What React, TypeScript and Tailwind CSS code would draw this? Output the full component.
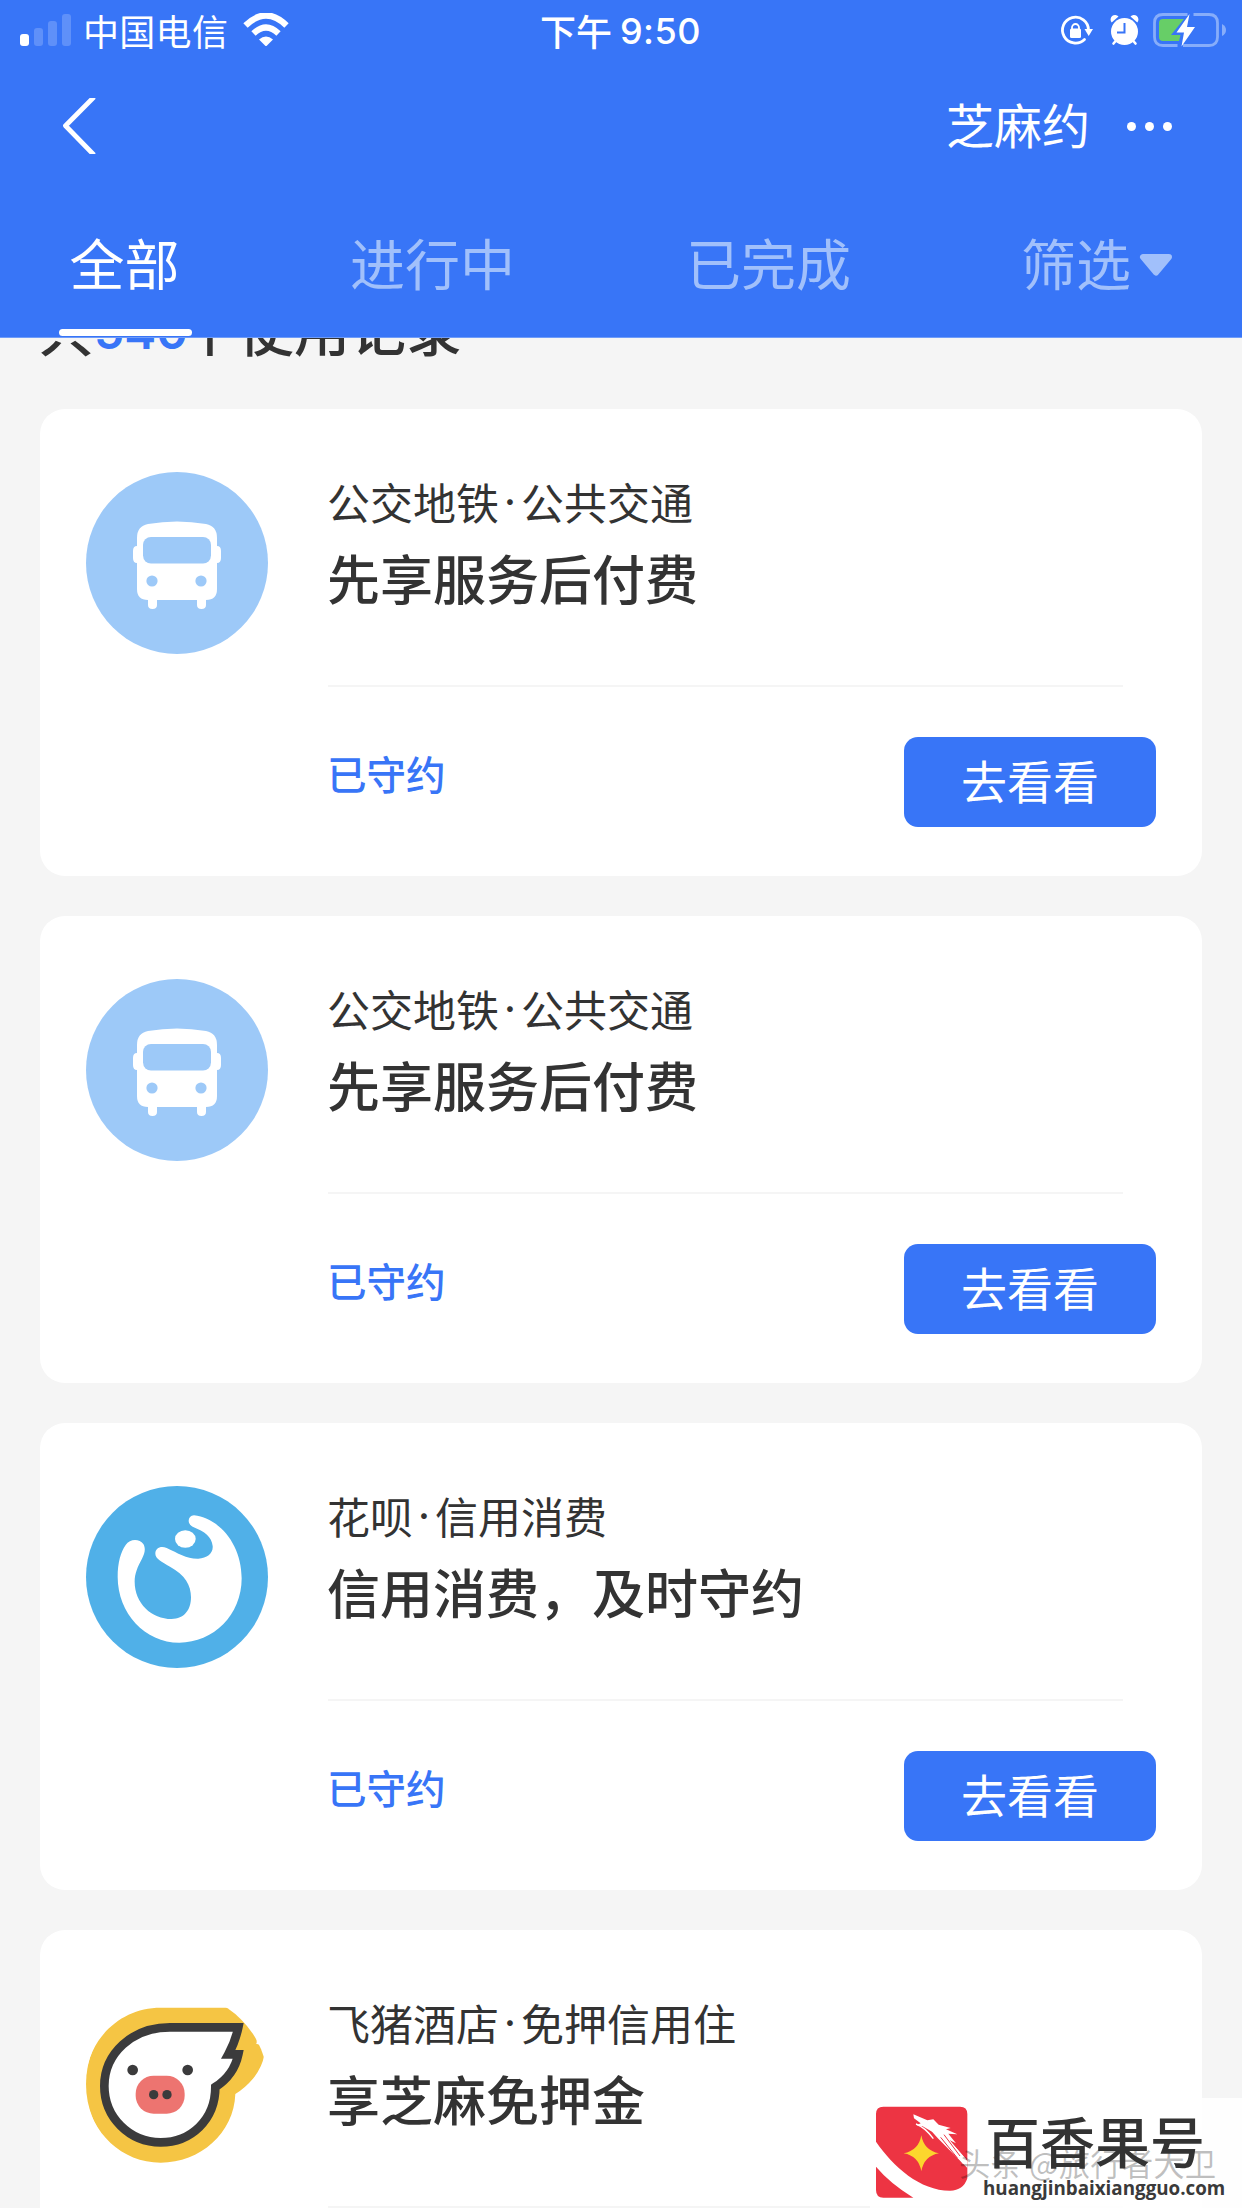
import type { ReactNode } from "react";

const BusIcon = () => (
  <svg viewBox="0 0 182 182" className="size-[182px]">
    <circle cx="91" cy="91" r="91" fill="#9dc9f8" />
    <path
      d="M51 66 Q51 54 62 52 Q91 47 120 52 Q131 54 131 66 V74 Q135 74 135 79 V86 Q135 91 131 91 V117 Q131 128 120 128 V133 Q120 137 115.500 137 Q111 137 111 133 V128 H71 V133 Q71 137 66.500 137 Q62 137 62 133 V128 Q51 128 51 117 V91 Q47 91 47 86 V79 Q47 74 51 74 Z"
      fill="#fff"
    />
    <rect x="57" y="65" width="68" height="26.500" rx="8" fill="#9dc9f8" />
    <circle cx="66" cy="109" r="5.600" fill="#9dc9f8" />
    <circle cx="115" cy="109" r="5.600" fill="#9dc9f8" />
  </svg>
);

const HuabeiIcon = () => (
  <svg viewBox="48 78 546 546" className="size-[182px]">
    <circle cx="321" cy="351" r="273" fill="#50b0e8" />
    <path
      d="M372 166 C450 175 515 255 515 355 C515 465 430 548 328 548 C225 548 143 460 143 350 C143 310 152 275 167 255 C180 236 208 236 220 252 C228 266 224 280 216 296 C203 320 194 340 194 365 C194 430 245 477 305 477 C342 477 363 450 363 412 C363 375 345 345 300 320 C275 304 256 297 256 281 C256 264 272 257 290 264 C325 280 350 297 385 296 C412 295 430 280 428 258 C425 230 405 215 368 200 C350 190 353 168 372 166 Z"
      fill="#fff"
    />
    <ellipse cx="346" cy="237" rx="31" ry="26" fill="#fff" />
  </svg>
);

const FliggyIcon = () => (
  <svg viewBox="48 39 546 546" className="size-[182px]">
    <clipPath id="fliggy">
      <circle cx="321" cy="312" r="273" />
    </clipPath>
    <g clipPath="url(#fliggy)">
      <path
        d="M272 83 H560 V192 Q575 190 582 228 Q577 260 550 295 Q525 325 496 342 C492 460 390 548 272 548 C145 548 46 440 46 315 C46 185 145 83 272 83 Z"
        fill="#f5c544"
      />
    </g>
    <path d="M564 188 L557 192 L600 192 V160 Z" fill="#fff" />
    <path
      d="M300 142 H505 Q496 185 475 223 H505 Q492 285 436 321 C436 420 362 487 272 487 C178 487 103 412 103 318 C103 222 185 142 300 142 Z"
      fill="#fff"
      stroke="#3b3b3c"
      strokeWidth="26"
    />
    <circle cx="188" cy="270" r="16" fill="#3b3b3c" />
    <circle cx="353" cy="270" r="16" fill="#3b3b3c" />
    <rect x="197" y="287" width="147" height="114" rx="54" fill="#ed7470" />
    <circle cx="251" cy="344" r="14" fill="#3b3b3c" />
    <circle cx="291" cy="344" r="14" fill="#3b3b3c" />
  </svg>
);

const StatusBar = () => {
  return (
    <div className="flex h-[60px] items-start pl-5">
      <div className="mt-[14px] flex h-8 items-end gap-[5px]">
        <span className="h-3 w-[9px] rounded-[3px] bg-white" />
        <span className="h-[18px] w-[9px] rounded-[3px] bg-[#5f90f9]" />
        <span className="h-[25px] w-[9px] rounded-[3px] bg-[#5f90f9]" />
        <span className="h-8 w-[9px] rounded-[3px] bg-[#5f90f9]" />
      </div>
      <span className="ml-[12px] w-[147px] text-[36px] leading-[60px] tracking-[0.300px]">
        中国电信
      </span>
      <svg viewBox="0 0 46 34" className="ml-[13px] mt-[13px] h-[34px] w-[46px]">
        <path d="M2.500 12.500 Q23 -7.500 43.500 12.500" stroke="#fff" strokeWidth="6.200" fill="none" />
        <path d="M10.500 20.500 Q23 8.500 35.500 20.500" stroke="#fff" strokeWidth="6.200" fill="none" />
        <path d="M16 26.500 Q23 20.500 30 26.500 L24 32.500 Q23 33.500 22 32.500 Z" fill="#fff" />
      </svg>
      <span className="ml-[251px] flex w-[161px] text-[36px] font-medium leading-[60px]">
        <span className="w-[80px]">下午</span>
        <span className="pt-px font-['Inter'] tracking-[0.500px]">9:50</span>
      </span>
      <svg viewBox="0 0 192 60" className="ml-[349px] h-[60px] w-[192px]">
        <path d="M34.500 39.500 A13 13 0 1 1 38.500 30" stroke="#fff" strokeWidth="2.800" fill="none" strokeLinecap="round" />
        <path d="M34.500 29 H43 L38.700 36 Z" fill="#fff" />
        <rect x="20" y="28.500" width="11" height="9.500" rx="1.500" fill="#fff" />
        <path d="M22 29.500 V27.500 A3.500 3.500 0 0 1 29 27.500 V29.500" stroke="#fff" strokeWidth="1.800" fill="none" />
        <circle cx="74.500" cy="31.500" r="13.500" fill="#fff" />
        <path d="M61.700 22.500 A4.500 4.500 0 0 1 68.500 16.500 Z M87.300 22.500 A4.500 4.500 0 0 0 80.500 16.500 Z" fill="#fff" />
        <path d="M66.500 40 L63.500 43.500 M82.500 40 L85.500 43.500" stroke="#fff" strokeWidth="2.600" strokeLinecap="round" />
        <path d="M74.500 23 V32.500 H67" stroke="#3875f7" strokeWidth="2" fill="none" />
        <path d="M137.500 14.500 H113 Q104.500 14.500 104.500 23 V37 Q104.500 45.500 113 45.500 H127.500 M143.500 14.500 H159 Q167.500 14.500 167.500 23 V37 Q167.500 45.500 159 45.500 H133" stroke="#87adfa" strokeWidth="2.800" fill="none" />
        <path d="M172 24 Q176 26 176 30 Q176 34 172 36 Z" fill="#87adfa" />
        <path d="M134 19 H113 Q109 19 109 23 V37 Q109 41 113 41 H129 L130.500 35 H121 Z" fill="#67ce67" />
        <path d="M139.500 14 L126.500 32.500 H134 L131.500 46.500 L145 27 H137 Z" fill="#fff" />
      </svg>
    </div>
  );
};

const Header = () => {
  return (
    <header className="relative z-10 h-[338px] shrink-0 border-b border-[#6f9cf9] bg-[#3875f7] text-white">
      <StatusBar />
      <div className="flex h-[132px] items-center justify-between pl-[62px] pr-[70px]">
        <svg viewBox="0 0 36 56" className="h-14 w-9">
          <path d="M32 -1 L3.500 27.800 L32 57" stroke="#fff" strokeWidth="4.800" fill="none" strokeLinejoin="round" />
        </svg>
        <div className="flex items-center gap-[37px]">
          <span className="mt-[-7px] text-[48px] leading-[60px]">芝麻约</span>
          <span className="flex gap-[9px]">
            <i className="size-[9px] rounded-full bg-white" />
            <i className="size-[9px] rounded-full bg-white" />
            <i className="size-[9px] rounded-full bg-white" />
          </span>
        </div>
      </div>
      <nav className="flex pl-[59px] text-[55px] leading-[138px] text-[#a1c0fb]">
        <div className="flex h-[144px] w-[133px] flex-col items-center text-white">
          <span className="h-[137px] pr-[2px]">全部</span>
          <span className="h-[7px] w-[133px] rounded-full bg-white" />
        </div>
        <span className="ml-[158px] w-[165px]">进行中</span>
        <span className="ml-[171px] w-[167px]">已完成</span>
        <span className="ml-[168px] flex w-[153px]">
          筛选
          <svg viewBox="0 0 34 24" className="ml-[8px] mt-[61px] h-6 w-[34px]">
            <path d="M4 4 H30 L17 19.500 Z" fill="#a1c0fb" stroke="#a1c0fb" strokeWidth="6" strokeLinejoin="round" />
          </svg>
        </span>
      </nav>
    </header>
  );
};

type RecordProps = {
  icon: ReactNode;
  source: string;
  category: string;
  title: string;
};

const RecordCard = ({ icon, source, category, title }: RecordProps) => {
  return (
    <div className="flex h-[467px] shrink-0 gap-[60px] rounded-[25px] bg-white px-[46px] pt-[63px]">
      <div className="w-[182px] shrink-0">{icon}</div>
      <div className="flex-1">
        <div className="ml-[-1px] flex h-[60px] text-[43px] leading-[58px]">
          <span>{source}</span>
          <span className="w-[22px] text-center font-['Inter']">·</span>
          <span>{category}</span>
        </div>
        <div className="ml-[-1px] mt-[5px] text-[53px] font-medium leading-[80px]">{title}</div>
        <div className="mr-[33px] mt-[68px] h-[2px] bg-[#f5f5f5]" />
        <div className="mt-[50px] flex items-center justify-between">
          <span className="ml-[-1px] pb-[18px] text-[39.500px] font-medium leading-[60px] text-[#3875f7]">
            已守约
          </span>
          <button className="h-[90px] w-[252px] rounded-[14px] bg-[#3875f7] pb-[6px] text-[46px] leading-[84px] text-white">
            去看看
          </button>
        </div>
      </div>
    </div>
  );
};

const Watermark = () => {
  return (
    <div className="absolute left-[870px] top-[2098px] z-20 h-[110px] w-[372px] bg-white/85">
      <svg viewBox="0 0 330 324" className="absolute left-0 top-[2px] h-[108px] w-[110px]">
        <path
          d="M40 20 H270 Q292 20 292 42 V235 Q280 272 240 272 C150 272 70 200 18 125 V42 Q18 20 40 20 Z M18 200 Q60 250 130 293 H40 Q18 293 18 270 Z"
          fill="#ed3443"
        />
        <path d="M154 106 Q162 152 207 160 Q162 168 154 214 Q146 168 101 160 Q146 152 154 106 Z" fill="#fcd62d" />
        <path
          d="M130 43 L172 61 L190 58 L206 74 L242 84 L228 88 L262 103 L235 101 L258 130 L238 120 L292 182 V204 L205 116 L186 95 L158 79 L140 76 L152 70 L132 55 Z"
          fill="#fff"
        />
        <path d="M138 72 Q165 82 190 116 M215 108 L280 190 M232 116 L286 178" stroke="#fff" strokeWidth="4" fill="none" />
        <path d="M222 104 L270 168 M212 112 L262 174" stroke="#ed3443" strokeWidth="3" fill="none" />
      </svg>
      <span className="absolute left-[89px] top-[45px] whitespace-nowrap text-[31.500px] leading-[38px] text-black/25">
        头条 @旅行者大卫
      </span>
      <span className="absolute left-[115px] top-[9px] whitespace-nowrap text-[55px] font-medium leading-[64px] text-[#333]">
        百香果号
      </span>
      <span className="absolute left-[113px] top-[77px] whitespace-nowrap font-['Open_Sans'] text-[18.800px] font-bold leading-[26px] text-[#3a3a3a]">
        huangjinbaixiangguo.com
      </span>
    </div>
  );
};

const records = [
  { icon: <BusIcon />, source: "公交地铁", category: "公共交通", title: "先享服务后付费" },
  { icon: <BusIcon />, source: "公交地铁", category: "公共交通", title: "先享服务后付费" },
  { icon: <HuabeiIcon />, source: "花呗", category: "信用消费", title: "信用消费，及时守约" },
  { icon: <FliggyIcon />, source: "飞猪酒店", category: "免押信用住", title: "享芝麻免押金" },
];

const App = () => {
  return (
    <div
      lang="zh-CN"
      className="relative flex h-[2208px] w-[1242px] flex-col overflow-hidden bg-[#f5f5f5] font-['Noto_Sans_CJK_SC',sans-serif] text-[#333]"
    >
      <Header />
      <main className="flex flex-col gap-10 px-10">
        <h2 className="mb-[12px] ml-[-2px] mt-[-41px] flex h-[60px] text-[56px] font-medium leading-[60px]">
          共
          <span className="w-[88px] text-center font-['Inter'] text-[48px] font-semibold leading-[70px] text-[#3875f7]">
            540
          </span>
          个使用记录
        </h2>
        {records.map((record, i) => (
          <RecordCard key={i} {...record} />
        ))}
      </main>
      <Watermark />
    </div>
  );
};

export default App;
